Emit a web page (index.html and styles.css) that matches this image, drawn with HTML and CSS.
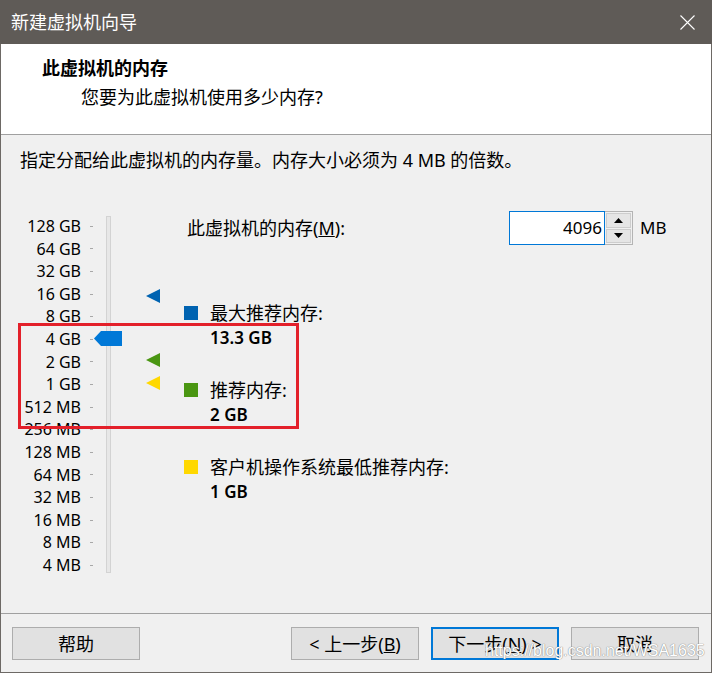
FILE: index.html
```html
<!DOCTYPE html>
<html lang="zh-CN">
<head>
<meta charset="utf-8">
<title>新建虚拟机向导</title>
<link rel="stylesheet" href="styles.css">
</head>
<body>
<div class="window">
  <div class="titlebar">
    <span class="title">新建虚拟机向导</span>
    <svg class="close" viewBox="0 0 15 15" aria-hidden="true"><path d="M0.5 0.5L14.5 14.5M14.5 0.5L0.5 14.5" stroke="#ffffff" stroke-width="1.1" fill="none"/></svg>
  </div>
  <div class="frame">
    <div class="header">
      <div class="h-title">此虚拟机的内存</div>
      <div class="h-sub">您要为此虚拟机使用多少内存?</div>
    </div>
    <div class="content">
      <div class="desc">指定分配给此虚拟机的内存量。内存大小必须为 4 MB 的倍数。</div>
      <div class="main">
        <div class="scale">
          <div class="labels">
            <div class="row"><span class="lbl">128 GB</span><span class="tick"></span></div>
            <div class="row"><span class="lbl">64 GB</span><span class="tick"></span></div>
            <div class="row"><span class="lbl">32 GB</span><span class="tick"></span></div>
            <div class="row"><span class="lbl">16 GB</span><span class="tick"></span></div>
            <div class="row"><span class="lbl">8 GB</span><span class="tick"></span></div>
            <div class="row"><span class="lbl">4 GB</span><span class="tick"></span></div>
            <div class="row"><span class="lbl">2 GB</span><span class="tick"></span></div>
            <div class="row"><span class="lbl">1 GB</span><span class="tick"></span></div>
            <div class="row"><span class="lbl">512 MB</span><span class="tick"></span></div>
            <div class="row"><span class="lbl">256 MB</span><span class="tick"></span></div>
            <div class="row"><span class="lbl">128 MB</span><span class="tick"></span></div>
            <div class="row"><span class="lbl">64 MB</span><span class="tick"></span></div>
            <div class="row"><span class="lbl">32 MB</span><span class="tick"></span></div>
            <div class="row"><span class="lbl">16 MB</span><span class="tick"></span></div>
            <div class="row"><span class="lbl">8 MB</span><span class="tick"></span></div>
            <div class="row"><span class="lbl">4 MB</span><span class="tick"></span></div>
          </div>
          <div class="track"></div>
          <div class="thumb" style="top:120px"></div>
          <div class="tri tri-blue" style="top:78px"></div>
          <div class="tri tri-green" style="top:142px"></div>
          <div class="tri tri-yellow" style="top:165px"></div>
        </div>
        <div class="panel">
          <div class="mem-row">
            <span class="mem-label">此虚拟机的内存(<u>M</u>):</span>
            <span class="input">4096</span>
            <span class="spin">
              <span class="spin-btn"><svg viewBox="0 0 9 5" class="arrow"><polygon points="0,5 4.5,0 9,5" fill="#000"/></svg></span>
              <span class="spin-btn"><svg viewBox="0 0 9 5" class="arrow"><polygon points="0,0 9,0 4.5,5" fill="#000"/></svg></span>
            </span>
            <span class="unit">MB</span>
          </div>
          <div class="legend">
            <div class="item">
              <div class="item-label"><span class="sq sq-blue"></span>最大推荐内存:</div>
              <div class="item-value">13.3 GB</div>
            </div>
            <div class="item">
              <div class="item-label"><span class="sq sq-green"></span>推荐内存:</div>
              <div class="item-value">2 GB</div>
            </div>
            <div class="item">
              <div class="item-label"><span class="sq sq-yellow"></span>客户机操作系统最低推荐内存:</div>
              <div class="item-value">1 GB</div>
            </div>
          </div>
        </div>
      </div>
    </div>
    <div class="footer">
      <div class="btn">帮助</div>
      <div class="nav">
        <div class="btn">&lt; 上一步(<u>B</u>)</div>
        <div class="btn btn-default">下一步(<u>N</u>) &gt;</div>
        <div class="btn">取消</div>
      </div>
    </div>
  </div>
  <div class="annot"></div>
  <div class="watermark">https://blog.csdn.net/WSA1635</div>
</div>
</body>
</html>
```
FILE: styles.css
```css
* { box-sizing: border-box; }
html, body { margin: 0; padding: 0; }
body {
  width: 712px;
  height: 673px;
  overflow: hidden;
  background: #f0f0f0;
  font-family: "Noto Sans", "Noto Sans CJK SC", sans-serif;
  color: #000;
}
.window { position: relative; width: 712px; height: 673px; }

.titlebar {
  height: 44px;
  background: #5f5b57;
  display: flex;
  align-items: center;
  justify-content: space-between;
  padding: 0 17px 0 11px;
  color: #fff;
  font-size: 18px;
}
.title { line-height: 24px; }
.close { width: 15px; height: 15px; display: block; }

.frame {
  height: 629px;
  border: 1px solid #6d6965;
  border-top: 0;
  display: flex;
  flex-direction: column;
}
.header {
  height: 91px;
  flex: none;
  background: #fff;
  border-bottom: 1px solid #a0a0a0;
  padding: 12px 0 0 41px;
  font-size: 18px;
  line-height: 24px;
}
.h-title { font-weight: bold; }
.h-sub { margin: 5px 0 0 39px; }

.content {
  height: 478px;
  flex: none;
  background: #f0f0f0;
  padding: 13px 0 0 19px;
}
.desc { font-size: 18px; line-height: 24px; }
.main { display: flex; margin-top: 39px; }

.scale {
  position: relative;
  width: 164px;
  flex: none;
  display: flex;
  padding-top: 4px;
}
.labels { width: 73px; display: flex; flex-direction: column; }
.row { height: 22.6px; display: flex; align-items: center; }
.lbl {
  width: 61px;
  text-align: right;
  font-size: 16px;
  line-height: 22.6px;
  white-space: nowrap;
}
.tick { width: 3px; height: 1px; margin-left: 9px; background: #a8a8a8; }
.track {
  width: 5px;
  margin: 1px 0 3.6px 13px;
  background: #e7e7e7;
  border: 1px solid #d3d3d3;
}
.thumb {
  position: absolute;
  left: 74px;
  width: 28px;
  height: 15px;
  background: #0078d7;
  clip-path: polygon(0 50%, 25% 0, 100% 0, 100% 100%, 25% 100%);
}
.tri {
  position: absolute;
  left: 126px;
  width: 14px;
  height: 14px;
  clip-path: polygon(0 50%, 100% 0, 100% 100%);
}
.tri-blue { background: #0063b1; }
.tri-green { background: #4a9612; }
.tri-yellow { background: #ffd800; }

.panel { flex: 1; }
.mem-row { display: flex; align-items: center; height: 34px; }
.mem-label {
  width: 325px;
  padding-left: 3px;
  font-size: 18px;
  line-height: 24px;
}
.input {
  width: 96px;
  height: 34px;
  border: 1px solid #0078d7;
  background: #fff;
  text-align: right;
  padding-right: 2px;
  font-size: 17px;
  line-height: 31px;
}
.spin {
  width: 28px;
  height: 34px;
  border: 1px solid #b4b4b4;
  border-left: 0;
  background: #f0f0f0;
  display: flex;
  flex-direction: column;
  padding: 1px;
  gap: 1px;
}
.spin-btn {
  flex: 1;
  background: #e5e5e5;
  border: 1px solid #cdcdcd;
  display: flex;
  align-items: center;
  justify-content: center;
}
.arrow { width: 9px; height: 5px; display: block; }
.unit { margin-left: 7px; font-size: 17px; line-height: 24px; }

.legend { margin-top: 56px; display: flex; flex-direction: column; gap: 28px; }
.item-label {
  display: flex;
  align-items: center;
  font-size: 18px;
  line-height: 24px;
}
.sq { width: 14px; height: 14px; margin-right: 12px; flex: none; }
.sq-blue { background: #0063b1; }
.sq-green { background: #4a9612; }
.sq-yellow { background: #ffd800; }
.item-value {
  padding-left: 26px;
  margin-top: 1px;
  font-weight: 600;
  font-size: 17px;
  line-height: 24px;
}

.footer {
  height: 59px;
  flex: none;
  border-top: 1px solid #a0a0a0;
  background: #f0f0f0;
  display: flex;
  align-items: flex-start;
  padding: 13px 12px 0 11px;
}
.nav { display: flex; gap: 12px; margin-left: auto; }
.btn {
  width: 128px;
  height: 33px;
  border: 1px solid #adadad;
  background: #e1e1e1;
  display: flex;
  align-items: center;
  justify-content: center;
  font-size: 18px;
  line-height: 24px;
}
.btn-default { border: 2px solid #0078d7; }

.annot {
  position: absolute;
  left: 18px;
  top: 323px;
  width: 281px;
  height: 106px;
  border: 3px solid #e3202a;
}
.watermark {
  position: absolute;
  left: 485px;
  top: 641px;
  font-family: "Liberation Sans", sans-serif;
  font-size: 16px;
  line-height: 20px;
  color: #ffffff;
  text-shadow: 0 0 1px #8a8a8a, 0 0 1px #8a8a8a;
  white-space: nowrap;
}
```
